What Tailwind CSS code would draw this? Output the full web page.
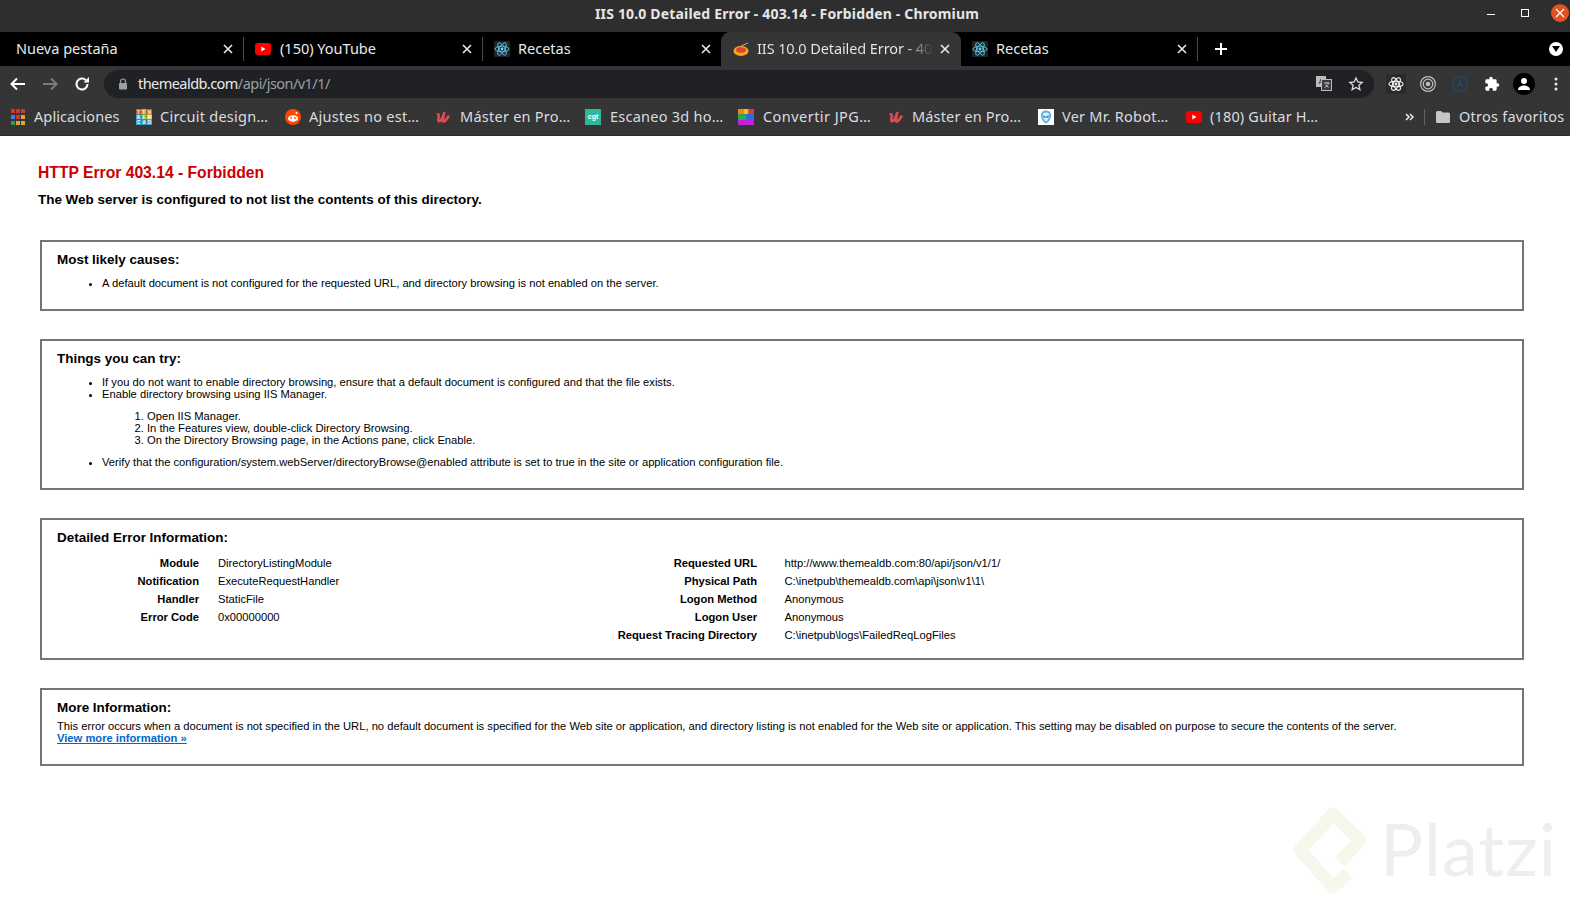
<!DOCTYPE html>
<html lang="es">
<head>
  <meta charset="UTF-8">
  <title>IIS 10.0 Detailed Error - 403.14 - Forbidden - Chromium</title>
  <script src="https://cdn.jsdelivr.net/npm/@tailwindcss/browser@4"></script>
</head>
<body class="bg-white h-[904px] w-[1570px] overflow-hidden relative font-['Liberation_Sans',Arial,sans-serif] text-black">

  <!-- barra de titulo -->
  <div class="h-8 bg-[#2e2e2e] relative flex items-center justify-center pb-[5px] pl-[4px] font-['Noto_Sans',sans-serif] font-bold text-[14px] text-[#e6e6e6] tracking-[0.17px]">
    IIS 10.0 Detailed Error - 403.14 - Forbidden - Chromium
    <div class="absolute right-0 top-0 h-[26px] flex items-center">
      <div class="w-[8px] h-px bg-white mr-[26px] mt-[3px]"></div>
      <div class="w-[8px] h-[8px] border border-white mr-[22px]"></div>
      <div class="w-[18px] h-[18px] rounded-full bg-[#e2511f] mr-[1px] flex items-center justify-center">
        <svg width="10" height="10" viewBox="0 0 10 10" stroke="#fff" stroke-width="1.3"><path d="M1 1l8 8M9 1l-8 8"/></svg>
      </div>
    </div>
  </div>

  <!-- pestañas -->
  <div class="h-[34px] bg-black flex items-center font-['Noto_Sans',sans-serif] text-[14.5px] text-[#e8eaed] relative">
    <div class="w-[244px] h-full flex items-center pl-4 pr-[10px] border-r border-[#4a4a4a] [border-image:linear-gradient(transparent_16%,#4a4a4a_16%,#4a4a4a_84%,transparent_84%)_1]">
      <span class="flex-1">Nueva pestaña</span>
      <svg width="10" height="10" viewBox="0 0 10 10" stroke="#e8eaed" stroke-width="1.6"><path d="M1 1l8 8M9 1l-8 8"/></svg>
    </div>
    <div class="w-[239px] h-full flex items-center pl-[11px] pr-[10px] border-r border-[#4a4a4a] [border-image:linear-gradient(transparent_16%,#4a4a4a_16%,#4a4a4a_84%,transparent_84%)_1]">
      <svg width="16" height="12" viewBox="0 0 16 12" class="mr-[9px]"><rect width="16" height="12" rx="3" fill="#f00"/><path d="M6.3 3.5l4.2 2.5-4.2 2.5z" fill="#fff"/></svg>
      <span class="flex-1">(150) YouTube</span>
      <svg width="10" height="10" viewBox="0 0 10 10" stroke="#e8eaed" stroke-width="1.6"><path d="M1 1l8 8M9 1l-8 8"/></svg>
    </div>
    <div class="w-[238px] h-full flex items-center pl-[11px] pr-[10px]">
      <svg width="16" height="16" viewBox="0 0 16 16" class="mr-[8px]"><rect width="16" height="16" rx="1" fill="#20232a"/><g fill="none" stroke="#61dafb" stroke-width="0.8"><ellipse cx="8" cy="8" rx="7" ry="2.8"/><ellipse cx="8" cy="8" rx="7" ry="2.8" transform="rotate(60 8 8)"/><ellipse cx="8" cy="8" rx="7" ry="2.8" transform="rotate(120 8 8)"/></g><circle cx="8" cy="8" r="1.4" fill="#61dafb"/></svg>
      <span class="flex-1">Recetas</span>
      <svg width="10" height="10" viewBox="0 0 10 10" stroke="#e8eaed" stroke-width="1.6"><path d="M1 1l8 8M9 1l-8 8"/></svg>
    </div>
    <div class="w-[240px] h-full flex items-center pl-3 pr-[11px] bg-[#353535] rounded-t-[9px]">
      <svg width="16" height="16" viewBox="0 0 16 16" class="mr-2 shrink-0"><path d="M8 5l7-3" stroke="#b9b0a0" stroke-width="1"/><ellipse cx="8" cy="10" rx="7.5" ry="5" fill="#f5a623"/><ellipse cx="8" cy="9" rx="5" ry="2.8" fill="#e0452c"/></svg>
      <span class="w-[176px] overflow-hidden whitespace-nowrap tracking-[-0.1px] text-transparent bg-clip-text bg-[linear-gradient(90deg,#e8eaed_84%,#353535_100%)]">IIS 10.0 Detailed Error - 403</span>
      <svg width="10" height="10" viewBox="0 0 10 10" stroke="#e8eaed" stroke-width="1.6" class="ml-auto"><path d="M1 1l8 8M9 1l-8 8"/></svg>
    </div>
    <div class="w-[237px] h-full flex items-center pl-[11px] pr-[10px] border-r border-[#4a4a4a] [border-image:linear-gradient(transparent_16%,#4a4a4a_16%,#4a4a4a_84%,transparent_84%)_1]">
      <svg width="16" height="16" viewBox="0 0 16 16" class="mr-[8px]"><rect width="16" height="16" rx="1" fill="#20232a"/><g fill="none" stroke="#61dafb" stroke-width="0.8"><ellipse cx="8" cy="8" rx="7" ry="2.8"/><ellipse cx="8" cy="8" rx="7" ry="2.8" transform="rotate(60 8 8)"/><ellipse cx="8" cy="8" rx="7" ry="2.8" transform="rotate(120 8 8)"/></g><circle cx="8" cy="8" r="1.4" fill="#61dafb"/></svg>
      <span class="flex-1">Recetas</span>
      <svg width="10" height="10" viewBox="0 0 10 10" stroke="#e8eaed" stroke-width="1.6"><path d="M1 1l8 8M9 1l-8 8"/></svg>
    </div>
    <svg width="12" height="12" viewBox="0 0 12 12" stroke="#fff" stroke-width="2" class="ml-[17px]"><path d="M6 0v12M0 6h12"/></svg>
    <div class="absolute right-[7px] top-[10px] w-[14px] h-[14px] rounded-full bg-white flex items-center justify-center">
      <svg width="8" height="6" viewBox="0 0 8 6"><path d="M0 0h8L4 6z" fill="#000"/></svg>
    </div>
  </div>

  <!-- barra de direcciones -->
  <div class="h-8 bg-[#353535] flex items-start pt-1 relative">
    <svg width="16" height="14" viewBox="0 0 16 14" fill="none" stroke="#fff" stroke-width="2" class="ml-[10px] mt-[7px]"><path d="M15 7H2M7 1.5L1.5 7 7 12.5"/></svg>
    <svg width="16" height="14" viewBox="0 0 16 14" fill="none" stroke="#7b7c80" stroke-width="2" class="ml-4 mt-[7px]"><path d="M1 7h13M9 1.5L14.5 7 9 12.500"/></svg>
    <svg width="16" height="16" viewBox="0 0 16 16" fill="none" class="ml-[16px] mt-[6px]"><path d="M13.5 8a5.5 5.5 0 1 1-1.6-3.9" stroke="#fff" stroke-width="2"/><path d="M9.500 6.500H15V1z" fill="#fff"/></svg>
    <div class="ml-[14px] w-[1270px] h-7 rounded-full bg-[#202124] flex items-center relative">
      <svg width="10" height="12" viewBox="0 0 10 12" class="ml-[14px]"><path d="M2.500 5V3.500a2.500 2.500 0 0 1 5 0V5" fill="none" stroke="#9aa0a6" stroke-width="1.200"/><rect x="1" y="5" width="8" height="6.500" rx="1" fill="#9aa0a6"/></svg>
      <span class="ml-[10px] font-['Noto_Sans',sans-serif] text-[14.5px] text-[#e8eaed] tracking-[-0.55px]">themealdb.com<span class="text-[#9aa0a6]">/api/json/v1/1/</span></span>
      <svg width="16" height="15" viewBox="0 0 16 15" class="absolute right-[42px] top-[6px]"><rect x="0" y="0" width="10" height="11" fill="#bdbdbd"/><path d="M3 8l2-5 2 5M3.800 6.500h2.400" stroke="#444" fill="none"/><rect x="5.500" y="3.500" width="10" height="11" fill="#3c3c3c" stroke="#bdbdbd"/><path d="M8 7h5.500M10.700 6v1M12.500 7c-.5 2-2 3.500-3.800 4.500M9.500 8.500c.7 1 1.800 2.200 3.200 3" stroke="#dadce0" stroke-width="0.800" fill="none"/></svg>
      <svg width="16" height="16" viewBox="0 0 24 24" fill="none" stroke="#dadce0" stroke-width="2" class="absolute right-[10px] top-[6px]"><path d="M12 3l2.800 6 6.400.7-4.800 4.300 1.400 6.500L12 17.200 6.200 20.500l1.400-6.500L2.800 9.700l6.400-.7z"/></svg>
    </div>
    <div class="ml-[12px] mt-[4px] w-5 h-5 bg-[#2b2b2b] flex items-center justify-center">
      <svg width="16" height="16" viewBox="0 0 16 16"><g fill="none" stroke="#f0f0f0" stroke-width="1.100"><ellipse cx="8" cy="8" rx="7" ry="2.800"/><ellipse cx="8" cy="8" rx="7" ry="2.800" transform="rotate(60 8 8)"/><ellipse cx="8" cy="8" rx="7" ry="2.800" transform="rotate(120 8 8)"/></g><circle cx="8" cy="8" r="1.400" fill="#f0f0f0"/></svg>
    </div>
    <svg width="16" height="16" viewBox="0 0 16 16" fill="none" stroke="#bdbdbd" class="ml-[14px] mt-[6px]"><circle cx="8" cy="8" r="7.400" stroke-width="1.200"/><circle cx="8" cy="8" r="4.800" stroke-width="1.200"/><circle cx="8" cy="8" r="2.300" fill="#bdbdbd" stroke="none"/></svg>
    <svg width="16" height="16" viewBox="0 0 16 16" fill="none" stroke="#23466f" class="ml-[16px] mt-[6px]"><circle cx="8" cy="8" r="7.400" stroke-width="1.200"/><path d="M5.300 11.300L8 4.500l2.700 6.800M6.200 9.200h3.600" stroke-width="1.500"/></svg>
    <svg width="16" height="16" viewBox="0 0 24 24" fill="#fff" class="ml-4 mt-[6px]"><path d="M20.500 11H19V7a2 2 0 0 0-2-2h-4V3.500a2.500 2.500 0 0 0-5 0V5H4a2 2 0 0 0-2 2v3.800h1.500a2.700 2.700 0 0 1 0 5.400H2V20a2 2 0 0 0 2 2h3.800v-1.500a2.700 2.700 0 0 1 5.400 0V22H17a2 2 0 0 0 2-2v-4h1.500a2.500 2.500 0 0 0 0-5z"/></svg>
    <div class="ml-[13px] mt-[3px] w-[22px] h-[22px] rounded-full bg-black flex items-center justify-center">
      <svg width="14" height="14" viewBox="0 0 14 14" fill="#fff"><circle cx="7" cy="4" r="3"/><path d="M1 13c0-3 3-4.500 6-4.500s6 1.500 6 4.500z"/></svg>
    </div>
    <svg width="4" height="14" viewBox="0 0 4 14" fill="#e8eaed" class="ml-[19px] mt-[7px]"><circle cx="2" cy="2" r="1.500"/><circle cx="2" cy="7" r="1.500"/><circle cx="2" cy="12" r="1.500"/></svg>
  </div>

  <!-- marcadores -->
  <div class="h-[38px] bg-[#353535] border-b border-[#2a2a2a] flex items-center font-['Noto_Sans',sans-serif] text-[14.5px] tracking-[0.25px] text-[#dadce0] relative whitespace-nowrap">
    <div class="w-[135px] flex items-center pl-[11px] gap-[9px]">
      <svg width="14" height="16" viewBox="0 0 14 16">
        <rect width="4" height="4" fill="#d8322f"/><rect x="5" width="4" height="4" fill="#d8322f"/><rect x="10" width="4" height="4" fill="#d8322f"/>
        <rect y="6" width="4" height="4" fill="#3f7de8"/><rect x="5" y="6" width="4" height="4" fill="#d8322f"/><rect x="10" y="6" width="4" height="4" fill="#e0a52c"/>
        <rect y="12" width="4" height="4" fill="#2e9e4b"/><rect x="5" y="12" width="4" height="4" fill="#e0a52c"/><rect x="10" y="12" width="4" height="4" fill="#e0a52c"/>
      </svg>
      <span class="tracking-[0.1px]">Aplicaciones</span>
    </div>
    <div class="w-[149px] flex items-center pl-[1px] gap-[8px]">
      <svg width="16" height="16" viewBox="0 0 16 16" font-family="Liberation Sans" font-size="4.500" font-weight="700" fill="#fff" text-anchor="middle" letter-spacing="0">
        <rect width="5.300" height="5.300" fill="#e3522b"/><rect x="5.300" width="5.300" height="5.300" fill="#f0a432"/><rect x="10.600" width="5.400" height="5.300" fill="#e3522b"/>
        <rect y="5.300" width="5.300" height="5.300" fill="#3aa6d0"/><rect x="5.300" y="5.300" width="5.300" height="5.300" fill="#6cbf4b"/><rect x="10.600" y="5.300" width="5.400" height="5.300" fill="#f0c43a"/>
        <rect y="10.600" width="5.300" height="5.400" fill="#3aa6d0"/><rect x="5.300" y="10.600" width="5.300" height="5.400" fill="#3aa6d0"/><rect x="10.600" y="10.600" width="5.400" height="5.400" fill="#3aa6d0"/>
        <text x="2.700" y="4.500">T</text><text x="8" y="4.500">I</text><text x="13.300" y="4.500">N</text>
        <text x="2.700" y="9.800">K</text><text x="8" y="9.800">E</text><text x="13.300" y="9.800">R</text>
        <text x="2.700" y="15">C</text><text x="8" y="15">A</text><text x="13.300" y="15">D</text>
      </svg>
      <span>Circuit design…</span>
    </div>
    <div class="w-[151px] flex items-center pl-[1px] gap-[8px]">
      <svg width="16" height="16" viewBox="0 0 16 16"><circle cx="8" cy="8" r="8" fill="#ff4500"/><ellipse cx="8" cy="9.500" rx="5" ry="3.200" fill="#fff"/><circle cx="6" cy="9" r="0.900" fill="#ff4500"/><circle cx="10" cy="9" r="0.900" fill="#ff4500"/><circle cx="11.500" cy="4" r="1" fill="#fff"/></svg>
      <span>Ajustes no est…</span>
    </div>
    <div class="w-[150px] flex items-center gap-[8px]">
      <svg width="16" height="14" viewBox="0 0 16 14" fill="none" stroke="#dc4a55" stroke-width="2.600" class="ml-[1px]"><path d="M1 5c2-2 2 1 1.500 3S2 12 4 11s3-5 4.500-9M8 5c-1 3-2 7 0 6.500s3-3 5-6"/></svg>
      <span>Máster en Pro…</span>
    </div>
    <div class="w-[153px] flex items-center gap-[9px]">
      <div class="w-4 h-4 bg-[#2fb79b] text-white font-bold text-[7px] tracking-normal leading-4 text-center font-['Liberation_Sans',sans-serif]">cgt</div>
      <span>Escaneo 3d ho…</span>
    </div>
    <div class="w-[150px] flex items-center gap-[9px]">
      <svg width="16" height="16" viewBox="0 0 16 16">
        <rect width="5.300" height="5" fill="#f5821f"/><rect x="5.300" width="5.300" height="5" fill="#f2c21a"/><rect x="10.600" width="5.400" height="5" fill="#e53935"/>
        <rect y="5" width="8" height="6" fill="#2fa84f"/><rect x="8" y="5" width="8" height="6" fill="#2a6fdb"/>
        <rect y="11" width="16" height="5" fill="#c020e0"/>
      </svg>
      <span class="tracking-[0.45px]">Convertir JPG…</span>
    </div>
    <div class="w-[150px] flex items-center gap-[7px]">
      <svg width="16" height="14" viewBox="0 0 16 14" fill="none" stroke="#dc4a55" stroke-width="2.600" class="ml-[1px]"><path d="M1 5c2-2 2 1 1.500 3S2 12 4 11s3-5 4.500-9M8 5c-1 3-2 7 0 6.500s3-3 5-6"/></svg>
      <span class="tracking-[0.15px]">Máster en Pro…</span>
    </div>
    <div class="w-[148px] flex items-center gap-[8px]">
      <svg width="16" height="16" viewBox="0 0 16 16"><rect width="16" height="16" fill="#fff"/><path d="M8 1.500c3.800 0 5.500 2.700 5 6S9.500 14.500 8 14.500 3.500 10.800 3 7.500 4.200 1.500 8 1.500z" fill="#5fb6e0"/><path d="M8 3.500c2.400 0 3.500 1.700 3.100 3.800S9 12.500 8 12.500 5.300 9.400 4.900 7.300 5.600 3.500 8 3.500z" fill="#d8eef8"/><path d="M5.500 7l2 1.500M10.500 7l-2 1.500" stroke="#1f5f85" stroke-width="1.300"/></svg>
      <span>Ver Mr. Robot…</span>
    </div>
    <div class="flex items-center gap-[8px]">
      <svg width="16" height="12" viewBox="0 0 16 12"><rect width="16" height="12" rx="3" fill="#f00"/><path d="M6.300 3.500l4.200 2.500-4.200 2.500z" fill="#fff"/></svg>
      <span class="tracking-[0.15px]">(180) Guitar H…</span>
    </div>
    <div class="absolute left-[1405px] top-0 h-[37px] flex items-center">
      <svg width="9" height="8" viewBox="0 0 9 8" fill="none" stroke="#e8eaed" stroke-width="1.500"><path d="M1 1l3 3-3 3M5 1l3 3-3 3"/></svg>
      <div class="w-px h-4 bg-[#5f6368] ml-[10px]"></div>
      <svg width="14" height="12" viewBox="0 0 14 12" fill="#c4c7c5" class="ml-[11px]"><path d="M0 1.500A1.500 1.500 0 0 1 1.500 0H5l1.500 1.500h6A1.500 1.500 0 0 1 14 3v7.500a1.500 1.500 0 0 1-1.500 1.500h-11A1.500 1.500 0 0 1 0 10.500z"/></svg>
      <span class="ml-[9px]">Otros favoritos</span>
    </div>
  </div>

  <!-- contenido -->
  <div class="pl-[38px] pt-[28px] text-[11.2px] leading-[12px]">
    <h1 class="text-[15.68px] leading-[18px] font-bold text-[#cc0000]">HTTP Error 403.14 - Forbidden</h1>
    <h2 class="text-[13.44px] leading-[16px] font-bold mt-[10px]">The Web server is configured to not list the contents of this directory.</h2>

    <div class="ml-[2px] mt-[32px] w-[1484px] h-[71px] border-2 border-[#757575] pl-[15px] pt-[10px]">
      <h3 class="text-[13.44px] leading-[16px] font-bold">Most likely causes:</h3>
      <ul class="list-disc pl-[45px] mt-[9px]">
        <li>A default document is not configured for the requested URL, and directory browsing is not enabled on the server.</li>
      </ul>
    </div>

    <div class="ml-[2px] mt-[28px] w-[1484px] h-[151px] border-2 border-[#757575] pl-[15px] pt-[10px]">
      <h3 class="text-[13.44px] leading-[16px] font-bold">Things you can try:</h3>
      <ul class="list-disc pl-[45px] mt-[9px]">
        <li>If you do not want to enable directory browsing, ensure that a default document is configured and that the file exists.</li>
        <li>Enable directory browsing using IIS Manager.
          <ol class="list-decimal pl-[45px] my-[10px]">
            <li>Open IIS Manager.</li>
            <li>In the Features view, double-click Directory Browsing.</li>
            <li>On the Directory Browsing page, in the Actions pane, click Enable.</li>
          </ol>
        </li>
        <li>Verify that the configuration/system.webServer/directoryBrowse@enabled attribute is set to true in the site or application configuration file.</li>
      </ul>
    </div>

    <div class="ml-[2px] mt-[28px] w-[1484px] h-[142px] border-2 border-[#757575] pl-[15px] pt-[10px]">
      <h3 class="text-[13.44px] leading-[16px] font-bold">Detailed Error Information:</h3>
      <div class="flex mt-[8px]">
        <div class="w-[566px] grid grid-cols-[142px_1fr] gap-x-[19px] auto-rows-[18px] items-center content-start">
          <span class="font-bold text-right">Module</span><span>DirectoryListingModule</span>
          <span class="font-bold text-right">Notification</span><span>ExecuteRequestHandler</span>
          <span class="font-bold text-right">Handler</span><span>StaticFile</span>
          <span class="font-bold text-right">Error Code</span><span>0x00000000</span>
        </div>
        <div class="grid grid-cols-[134px_1fr] gap-x-[27.5px] auto-rows-[18px] items-center content-start">
          <span class="font-bold text-right">Requested URL</span><span>http://www.themealdb.com:80/api/json/v1/1/</span>
          <span class="font-bold text-right">Physical Path</span><span>C:\inetpub\themealdb.com\api\json\v1\1\</span>
          <span class="font-bold text-right">Logon Method</span><span>Anonymous</span>
          <span class="font-bold text-right">Logon User</span><span>Anonymous</span>
          <span class="font-bold text-right whitespace-nowrap justify-self-end">Request Tracing Directory</span><span>C:\inetpub\logs\FailedReqLogFiles</span>
        </div>
      </div>
    </div>

    <div class="ml-[2px] mt-[28px] w-[1484px] h-[78px] border-2 border-[#757575] pl-[15px] pt-[10px]">
      <h3 class="text-[13.44px] leading-[16px] font-bold">More Information:</h3>
      <p class="mt-[4px]">This error occurs when a document is not specified in the URL, no default document is specified for the Web site or application, and directory listing is not enabled for the Web site or application. This setting may be disabled on purpose to secure the contents of the server.<br><a href="#" class="font-bold text-[#0066cc] underline">View more information »</a></p>
    </div>
  </div>

  <!-- marca de agua -->
  <div class="absolute left-[1292px] top-[806px] w-[270px] h-[90px]">
    <svg width="76" height="90" viewBox="0 0 76 90" fill="none" class="absolute left-0 top-0"><path d="M56 67L41 81 8 44 41 8 68 34 48 56" stroke="#f6f8ee" stroke-width="13" stroke-linejoin="round"/></svg>
    <span class="absolute left-[88px] top-[6px] font-['Lato',sans-serif] text-[72px] leading-none tracking-[1px] text-[#eeeeee]">Platzi</span>
  </div>
</body>
</html>
